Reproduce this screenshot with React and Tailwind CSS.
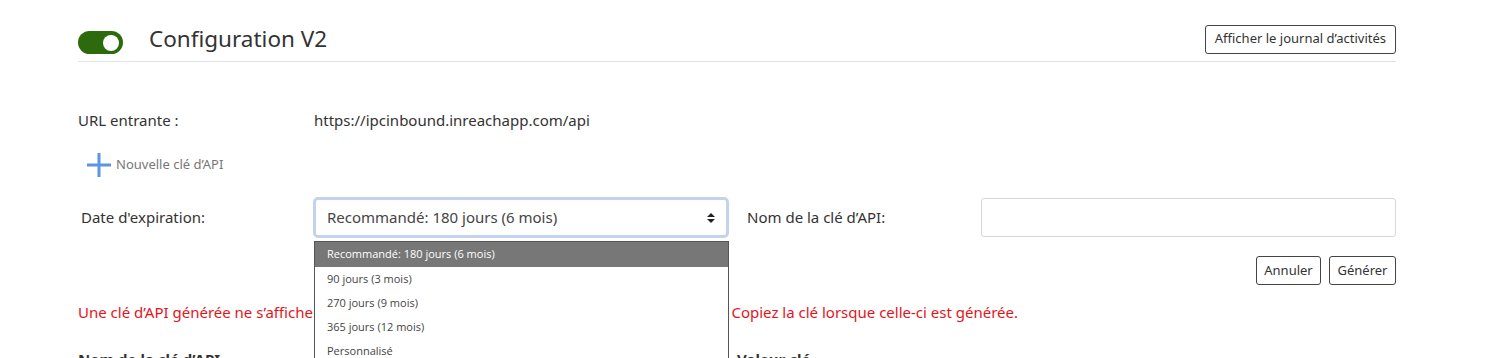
import React from "react";

export default function App() {
  const options = [
    "Recommandé: 180 jours (6 mois)",
    "90 jours (3 mois)",
    "270 jours (9 mois)",
    "365 jours (12 mois)",
    "Personnalisé",
  ];
  return (
    <div className="w-[1486px] h-[358px] overflow-hidden bg-white pl-[78px] pr-[90px] text-[#333] font-['Noto_Sans',sans-serif]">
      {/* Header */}
      <div className="flex items-center justify-between pt-[24px] pb-[7px] border-b border-[#e2e2ea]">
        <div className="flex items-center">
          <div className="w-[45px] h-[23px] rounded-full bg-[#2c6a0b] flex items-center justify-end pr-[4px] mt-[7px]">
            <div className="w-[16px] h-[16px] rounded-full bg-white" />
          </div>
          <h1 className="ml-[26px] text-[22.5px] leading-[28px] text-[#333] font-normal">Configuration V2</h1>
        </div>
        <button className="h-[29px] px-[9px] border border-[#444] rounded-[3px] text-[13px] text-[#333] bg-white">
          Afficher le journal d’activités
        </button>
      </div>

      {/* URL */}
      <div className="flex items-center mt-[48px] h-[20px] text-[15px] leading-[20px]">
        <div className="w-[236px]">URL entrante :</div>
        <div>https://ipcinbound.inreachapp.com/api</div>
      </div>

      {/* New key */}
      <div className="flex items-center mt-[23px] ml-[9px] h-[24px]">
        <svg width="24" height="24" viewBox="0 0 24 24">
          <path d="M12 0 V24 M0 12 H24" stroke="#5e94e4" strokeWidth="3" />
        </svg>
        <span className="ml-[5px] text-[13px] text-[#777]">Nouvelle clé d’API</span>
      </div>

      {/* Form row */}
      <div className="flex items-center mt-[20px] h-[41px]">
        <div className="w-[235px] pl-[3px] text-[15px]">Date d'expiration:</div>
        <div className="relative w-[416px] h-[41px]">
          <div className="h-full border-[3px] border-[#c3d3ee] rounded-[5px] flex items-center justify-between pl-[11px] pr-[11px] bg-white">
            <span className="text-[15px] text-[#444]">Recommandé: 180 jours (6 mois)</span>
            <svg width="8" height="12" viewBox="0 0 8 12">
              <path d="M0 5 L4 1 L8 5 Z M0 7 L4 11 L8 7 Z" fill="#222" />
            </svg>
          </div>
          <div className="absolute left-[1px] top-[44px] w-[415px] border border-[#555] bg-white z-10 font-['Open_Sans',sans-serif] text-[11px]">
            {options.map((o, i) => (
              <div
                key={o}
                className={
                  i === 0
                    ? "h-[25px] flex items-center pl-[12px] bg-[#777] text-white"
                    : "h-[24px] flex items-center pl-[12px] text-[#444]"
                }
              >
                {o}
              </div>
            ))}
          </div>
        </div>
        <div className="w-[252px] pl-[18px] text-[15px]">Nom de la clé d’API:</div>
        <input className="w-[415px] h-[39px] border border-[#d3d7df] rounded-[3px] outline-none" />
      </div>

      {/* Buttons */}
      <div className="flex justify-end gap-[8px] mt-[18px]">
        <button className="h-[29px] w-[65px] border border-[#444] rounded-[3px] text-[13px] text-[#333] bg-white">Annuler</button>
        <button className="h-[29px] w-[67px] border border-[#444] rounded-[3px] text-[13px] text-[#333] bg-white">Générer</button>
      </div>

      {/* Warning */}
      <div className="mt-[17px] text-[15px] leading-[20px] text-[#e4141b] whitespace-nowrap">
        Une clé d’API générée ne s’affichera qu’une seule fois pour des raisons évidentes de sécurité. Copiez la clé lorsque celle-ci est générée.
      </div>

      {/* Table head */}
      <div className="flex mt-[27px] text-[15px] leading-[20px] font-bold text-[#333]">
        <div className="w-[659px]">Nom de la clé d’API</div>
        <div>Valeur clé</div>
      </div>
    </div>
  );
}
